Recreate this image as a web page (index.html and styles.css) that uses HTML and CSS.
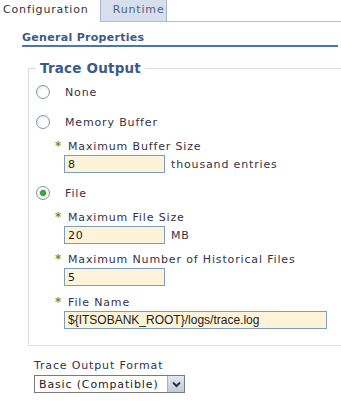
FILE: index.html
```html
<!DOCTYPE html>
<html lang="en">

<head>
    <meta charset="UTF-8">
    <meta name="viewport" content="width=device-width, initial-scale=1.0">
    <title>Trace Service Configuration</title>
    <link rel="stylesheet" href="styles.css">
</head>

<body>
    <div class="tabs">
        <div class="tab active">Configuration</div>
        <div class="tab">Runtime</div>
        <div class="tab-rest"></div>
    </div>

    <div class="content">
        <h2 class="section-title">General Properties</h2>

        <fieldset class="group">
            <legend>Trace Output</legend>

            <label class="option">
                <input type="radio" name="output" value="none">
                <span>None</span>
            </label>

            <label class="option">
                <input type="radio" name="output" value="memory">
                <span>Memory Buffer</span>
            </label>
            <div class="sub first">
                <div class="sub-label"><span class="req">*</span>Maximum Buffer Size</div>
                <div class="sub-row">
                    <input type="text" class="text-input short" value="8">
                    <span class="unit">thousand entries</span>
                </div>
            </div>

            <label class="option file-option">
                <input type="radio" name="output" value="file" checked>
                <span>File</span>
            </label>
            <div class="sub first">
                <div class="sub-label"><span class="req">*</span>Maximum File Size</div>
                <div class="sub-row">
                    <input type="text" class="text-input short" value="20">
                    <span class="unit">MB</span>
                </div>
            </div>
            <div class="sub">
                <div class="sub-label"><span class="req">*</span>Maximum Number of Historical Files</div>
                <div class="sub-row">
                    <input type="text" class="text-input short" value="5">
                </div>
            </div>
            <div class="sub last">
                <div class="sub-label"><span class="req">*</span>File Name</div>
                <div class="sub-row">
                    <input type="text" class="text-input long" value="${ITSOBANK_ROOT}/logs/trace.log">
                </div>
            </div>
        </fieldset>

        <div class="format">
            <div class="format-label">Trace Output Format</div>
            <div class="select-box">
                <select>
                    <option>Basic (Compatible)</option>
                    <option>Advanced</option>
                    <option>Log Analyzer</option>
                </select>
                <span class="select-arrow">
                    <svg width="9" height="7" viewBox="0 0 9 7">
                        <path d="M1 1.5 L4.5 5 L8 1.5" fill="none" stroke="#2a3448" stroke-width="2"/>
                    </svg>
                </span>
            </div>
        </div>
    </div>
</body>

</html>
```

FILE: styles.css
```css
* {
    box-sizing: border-box;
}
:root {
    --text: #353244;
    --title: #3b5a8a;
    --line: #4a78ab;
    --input-bg: #fdf3d8;
    --input-border: #7f9db9;
}
body {
    margin: 0;
    overflow: hidden;
    background: #fff;
    color: var(--text);
    font-family: "DejaVu Sans", Verdana, sans-serif;
    font-size: 11px;
    letter-spacing: 0.85px;
}

/* tabs */
.tabs {
    display: flex;
    height: 22px;
}
.tab {
    height: 22px;
    line-height: 19px;
    padding: 0 1px 0 12px;
    background: #d8dfec;
    color: #4a6288;
    border-left: 1px solid #a8b4cc;
    border-right: 1px solid #a8b4cc;
    border-bottom: 1px solid #b3bdd2;
}
.tab.active {
    padding: 0 11px 0 3px;
    background: #fff;
    color: #333;
    border: none;
}
.tab-rest {
    width: 176px;
    border-bottom: 1px solid #b3bdd2;
}

/* content */
.content {
    padding: 0 3px 0 22px;
}
.section-title {
    margin: 9px 0 0 0;
    font-size: 11px;
    line-height: 14px;
    font-weight: bold;
    letter-spacing: 0.3px;
    color: var(--title);
    border-bottom: 2px solid var(--line);
}

.group {
    margin: 13px -12px 0 6px;
    padding: 0 7px 16px 7px;
    border: 1px solid #dcdcdc;
}
.group legend {
    padding: 0 4px;
    font-size: 13.5px;
    line-height: 17px;
    font-weight: bold;
    letter-spacing: 0.2px;
    color: var(--title);
}

.option {
    display: flex;
    align-items: center;
    height: 30px;
}
.option input {
    appearance: none;
    margin: 0 15px 0 0;
    width: 14px;
    height: 14px;
    border: 1px solid #8593aa;
    border-radius: 50%;
    background: radial-gradient(circle at 60% 65%, #ffffff 30%, #dfe3ea 100%);
}
.option input:checked {
    background: radial-gradient(circle, #3cb44a 0, #2f9e3d 2.5px, #cfe9cf 3.5px, #ffffff 4.5px, #e2e6ec 100%);
}
.file-option {
    margin-top: 5px;
}

.sub {
    margin: 8px 0 0 19px;
}
.sub.first {
    margin-top: 2px;
}
.sub.last {
    margin-top: 9px;
}
.sub-label {
    line-height: 14px;
}
.req {
    display: inline-block;
    width: 13px;
    color: #8c8a10;
    font-weight: bold;
    font-size: 12px;
}
.sub-row {
    display: flex;
    align-items: center;
    margin: 1px 0 0 9px;
}
.text-input {
    height: 18px;
    padding: 0 3px;
    border: 1px solid var(--input-border);
    background: var(--input-bg);
    color: #222;
    font-family: "DejaVu Sans", Verdana, sans-serif;
    font-size: 11px;
    letter-spacing: 0.85px;
    outline: none;
}
.text-input.short {
    width: 101px;
}
.text-input.long {
    width: 263px;
    font-family: "Liberation Sans", Arial, sans-serif;
    font-size: 12px;
    letter-spacing: 0;
}
.unit {
    margin-left: 6px;
}

/* format select */
.format {
    margin: 13px 0 0 12px;
}
.format-label {
    line-height: 14px;
}
.select-box {
    position: relative;
    width: 151px;
    margin-top: 2px;
}
.select-box select {
    appearance: none;
    width: 151px;
    height: 18px;
    padding: 0 0 0 4px;
    border: 1px solid #7a7a7a;
    border-radius: 0;
    background: #fff;
    color: #222;
    font-family: "DejaVu Sans", Verdana, sans-serif;
    font-size: 11px;
    letter-spacing: 0.85px;
}
.select-arrow {
    position: absolute;
    top: 1px;
    right: 1px;
    width: 17px;
    height: 16px;
    display: flex;
    align-items: center;
    justify-content: center;
    background: linear-gradient(#e4e7ee, #c3c9d6);
    border-left: 1px solid #a9b1c2;
    pointer-events: none;
}
```
